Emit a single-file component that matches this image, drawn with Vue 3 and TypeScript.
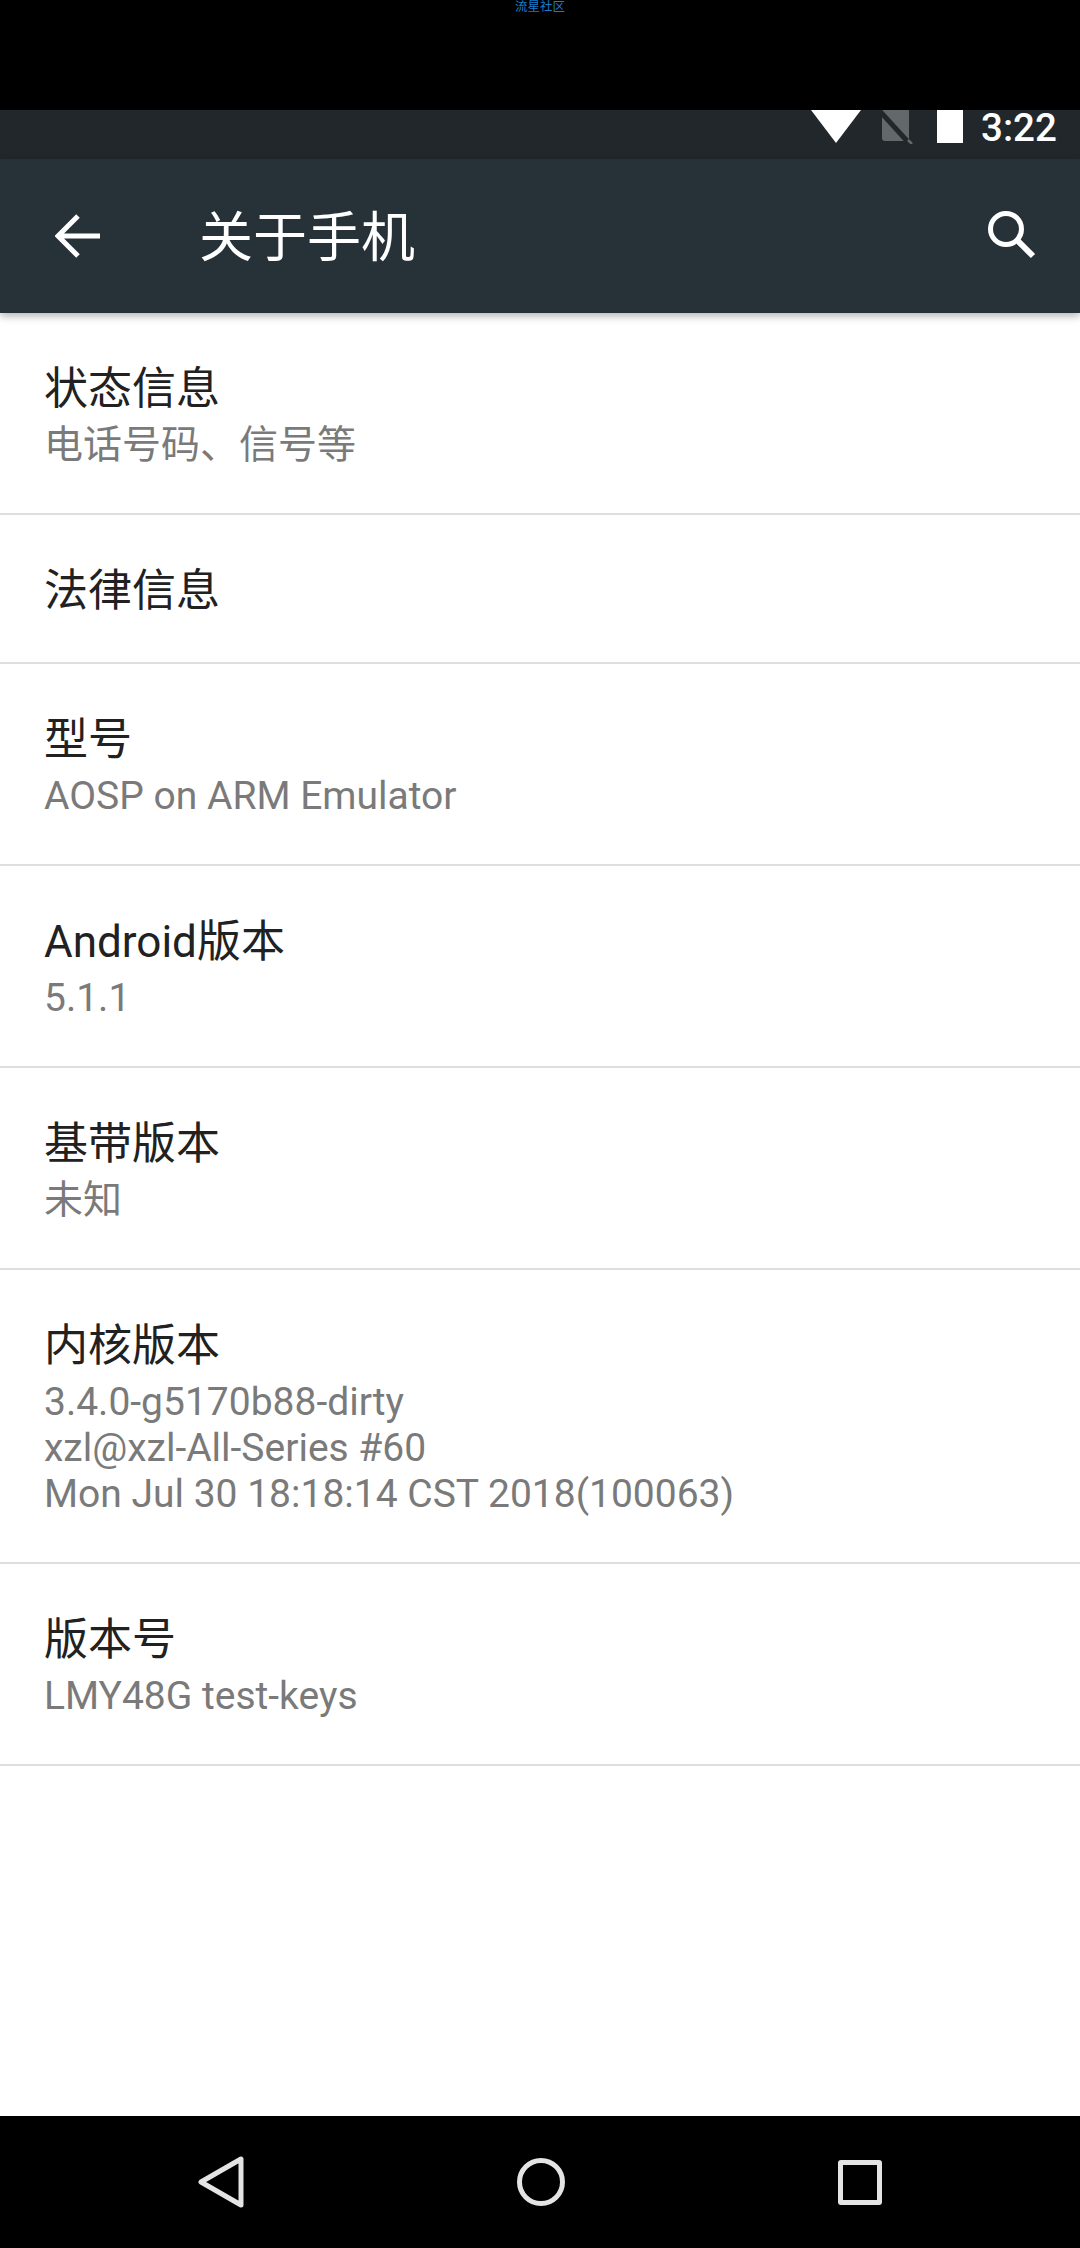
<script setup lang="ts">
interface Row {
  title: string;
  lines: string[];
}

const rows: Row[] = [
  { title: '状态信息', lines: ['电话号码、信号等'] },
  { title: '法律信息', lines: [] },
  { title: '型号', lines: ['AOSP on ARM Emulator'] },
  { title: 'Android版本', lines: ['5.1.1'] },
  { title: '基带版本', lines: ['未知'] },
  {
    title: '内核版本',
    lines: ['3.4.0-g5170b88-dirty', 'xzl@xzl-All-Series #60', 'Mon Jul 30 18:18:14 CST 2018(100063)']
  },
  { title: '版本号', lines: ['LMY48G test-keys'] }
];
</script>

<template>
  <div class="page">
    <div class="topband">
      <span class="mark">流星社区</span>
    </div>
    <div class="status">
      <svg class="wifi" width="50" height="33" viewBox="0 0 50 33">
        <path d="M0 0H50L25 33Z" fill="#fff" />
      </svg>
      <svg class="sim" width="36" height="34" viewBox="0 0 36 34">
        <path d="M5 0H32V28Q32 31 29 31H8Q5 31 5 28Z" fill="#63686b" />
        <path d="M0 -2L31 32" stroke="#21272b" stroke-width="5" />
        <path d="M31 30L35 34" stroke="#63686b" stroke-width="2.5" />
      </svg>
      <div class="battery"></div>
      <span class="time">3:22</span>
    </div>
    <header class="toolbar">
      <svg class="back" width="46" height="44" viewBox="0 0 46 44">
        <path d="M23 2L3 22L23 42M3 22H45" fill="none" stroke="#fff" stroke-width="5" />
      </svg>
      <h1 class="heading">关于手机</h1>
      <svg class="search" width="50" height="50" viewBox="0 0 50 50">
        <circle cx="19" cy="19" r="15.5" fill="none" stroke="#fff" stroke-width="5" />
        <path d="M30 30L46 46" stroke="#fff" stroke-width="6" />
      </svg>
    </header>
    <main class="list">
      <div v-for="row in rows" :key="row.title" class="row" :class="{ single: !row.lines.length }">
        <div class="title">{{ row.title }}</div>
        <div v-if="row.lines.length" class="summary">
          <div v-for="line in row.lines" :key="line">{{ line }}</div>
        </div>
      </div>
    </main>
    <footer class="nav">
      <svg width="46" height="52" viewBox="0 0 46 52">
        <path d="M43 3V49L3 26Z" fill="none" stroke="#e4e4e4" stroke-width="5" stroke-linejoin="round" />
      </svg>
      <svg width="48" height="50" viewBox="0 0 48 50">
        <circle cx="24" cy="25" r="21.5" fill="none" stroke="#e4e4e4" stroke-width="5" />
      </svg>
      <div class="square"></div>
    </footer>
  </div>
</template>

<style scoped>
.page {
  width: 1080px;
  height: 2248px;
  display: flex;
  flex-direction: column;
  background: #fff;
  overflow: hidden;
  font-family: Roboto, "Noto Sans CJK SC", sans-serif;
}
.topband {
  height: 110px;
  flex: none;
  background: #000;
  text-align: center;
}
.mark {
  display: block;
  font-size: 12.5px;
  line-height: 14px;
  color: #1a7ccb;
}
.status {
  height: 49px;
  flex: none;
  background: #21272b;
  display: flex;
  align-items: flex-start;
  color: #fff;
}
.wifi {
  margin-left: 811px;
}
.sim {
  margin-left: 16px;
}
.battery {
  width: 26px;
  height: 33px;
  margin-left: 24px;
  background: #fff;
}
.time {
  margin-left: 18px;
  font-size: 38.5px;
  line-height: 36px;
  height: 36px;
  font-weight: 500;
}
.toolbar {
  height: 154px;
  flex: none;
  background: #263238;
  display: flex;
  align-items: center;
  color: #fff;
  box-shadow: 0 3px 8px rgba(0, 0, 0, 0.3);
  position: relative;
}
.back {
  margin-left: 55px;
}
.heading {
  margin: 0 0 6px 98px;
  font-size: 54px;
  font-weight: 400;
  flex: 1;
}
.search {
  margin-right: 43px;
  margin-bottom: 2px;
}
.list {
  flex: 1;
}
.row {
  padding: 47px 44px 45px;
  border-bottom: 2px solid #dedede;
}
.row.single {
  padding-bottom: 42px;
}
.title {
  font-size: 44px;
  line-height: 58px;
  color: #212121;
}
.summary {
  margin-top: 4px;
  font-size: 39px;
  line-height: 46px;
  color: #7a7a7a;
}
.nav {
  height: 132px;
  flex: none;
  background: #000;
  display: flex;
  align-items: center;
  justify-content: space-between;
  padding: 0 198px;
}
.square {
  width: 44px;
  height: 45px;
  box-sizing: border-box;
  border: 5px solid #e4e4e4;
  border-radius: 3px;
}
</style>
